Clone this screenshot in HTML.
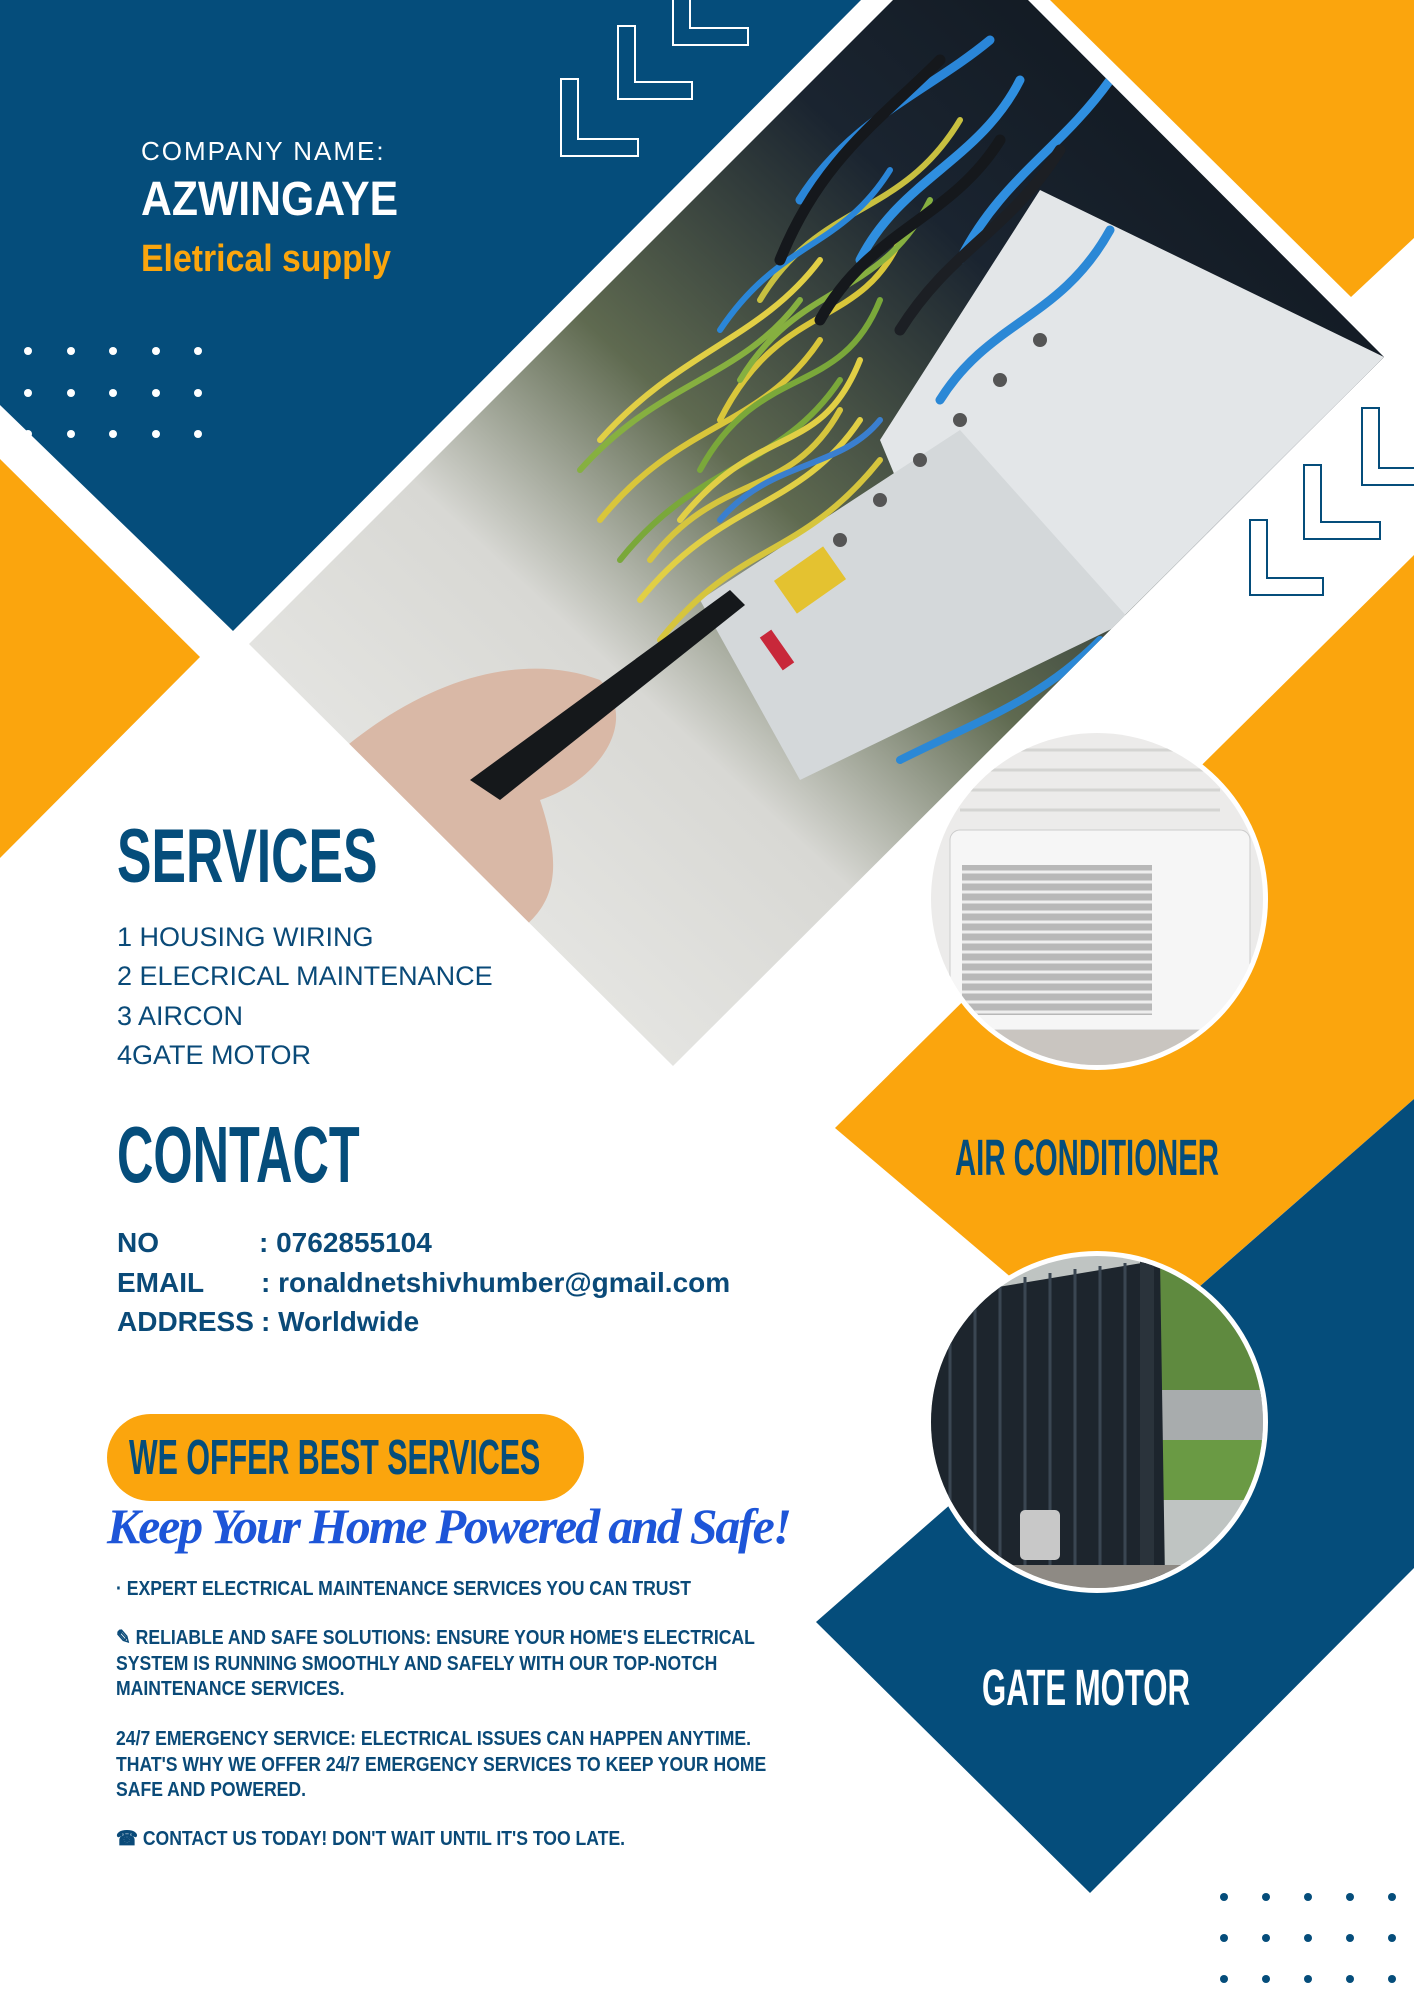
<!DOCTYPE html>
<html><head><meta charset="utf-8"><style>
*{margin:0;padding:0;box-sizing:border-box}
body{width:1414px;height:2000px;position:relative;overflow:hidden;background:#fff;font-family:"Liberation Sans",sans-serif;color:#0a4a78}
.a{position:absolute;white-space:nowrap;line-height:1}
.c{display:inline-block;transform-origin:0 0;font-weight:bold}
svg{position:absolute;left:0;top:0}
</style></head><body>
<svg width="1414" height="2000" viewBox="0 0 1414 2000">
<defs>
<clipPath id="ph"><polygon points="893,0 1028,0 1384,357 673,1066 249,644"/></clipPath>
<linearGradient id="pg" x1="0" y1="1" x2="1" y2="0">
<stop offset="0" stop-color="#f2f2f0"/><stop offset=".35" stop-color="#d8d8d4"/><stop offset=".5" stop-color="#5f6a50"/><stop offset=".7" stop-color="#1a2430"/><stop offset="1" stop-color="#0c1218"/></linearGradient>
<clipPath id="c1"><circle cx="1097" cy="899" r="166"/></clipPath>
<clipPath id="c2"><circle cx="1097" cy="1422" r="166"/></clipPath>
</defs>
<polygon points="0,0 861,0 233,631 0,405" fill="#054d7b"/>
<polygon points="1050,0 1414,0 1414,238 1351,297" fill="#fba50d"/>
<polygon points="0,459 200,657 0,858" fill="#fba50d"/>
<polygon points="835,1128 1414,555 1414,1099 1112,1363" fill="#fba50d"/>
<polygon points="816,1622 1414,1099 1414,1568 1090,1893" fill="#054d7b"/>
<g clip-path="url(#ph)">
<rect x="240" y="0" width="1150" height="1070" fill="url(#pg)"/>
<polygon points="1040,190 1384,357 1120,620 930,560 880,440" fill="#e3e6e8"/>
<polygon points="700,600 960,430 1130,620 800,780" fill="#d4d8da"/>
<g fill="none" stroke-width="6" stroke-linecap="round">
<path d="M600,520 C680,420 760,430 820,340" stroke="#d9c63a"/>
<path d="M620,560 C700,460 780,470 840,380" stroke="#7aa83a"/>
<path d="M640,600 C720,500 800,510 860,420" stroke="#e1cf45"/>
<path d="M580,470 C660,380 740,380 800,300" stroke="#86b040"/>
<path d="M600,440 C680,350 760,340 820,260" stroke="#e1cf45"/>
<path d="M660,640 C740,540 800,560 880,460" stroke="#d6c53d"/>
<path d="M720,420 C780,300 860,330 900,240" stroke="#d9c63a"/>
<path d="M700,470 C760,360 840,400 880,300" stroke="#7aa83a"/>
<path d="M680,520 C760,420 820,460 860,360" stroke="#e1cf45"/>
<path d="M740,380 C800,280 880,300 930,200" stroke="#86b040"/>
<path d="M650,560 C720,470 790,500 840,410" stroke="#d6c53d"/>
<path d="M760,300 C820,200 900,220 960,120" stroke="#c8c040"/>
<path d="M720,330 C780,240 840,250 890,170" stroke="#2a86d8"/>
<path d="M800,200 C850,120 930,90 990,40" stroke="#2a86d8" stroke-width="9"/>
<path d="M860,260 C900,180 980,160 1020,80" stroke="#2f8fe0" stroke-width="9"/>
<path d="M960,260 C1000,180 1060,150 1110,80" stroke="#2f8fe0" stroke-width="9"/>
<path d="M900,330 C950,250 1010,230 1060,150" stroke="#1c1f24" stroke-width="11"/>
<path d="M820,320 C870,230 950,220 1000,140" stroke="#15181c" stroke-width="11"/>
<path d="M780,260 C820,160 880,120 940,60" stroke="#15181c" stroke-width="11"/>
<path d="M940,400 C990,320 1060,320 1110,230" stroke="#2b88d6" stroke-width="9"/>
<path d="M720,520 C770,460 840,470 880,420" stroke="#3a7fcf"/>
<path d="M900,760 C980,720 1040,700 1100,640" stroke="#2b88d6" stroke-width="8"/>
</g>
<g fill="#555">
<circle cx="840" cy="540" r="7"/><circle cx="880" cy="500" r="7"/><circle cx="920" cy="460" r="7"/><circle cx="960" cy="420" r="7"/><circle cx="1000" cy="380" r="7"/><circle cx="1040" cy="340" r="7"/>
</g>
<rect x="780" y="560" width="60" height="40" fill="#e4c230" transform="rotate(-35 810 580)"/>
<rect x="770" y="630" width="14" height="40" fill="#c8283a" transform="rotate(-35 777 650)"/>
<path d="M330,760 C420,680 520,650 600,680 C640,720 600,780 540,800 C560,860 560,900 520,930 C470,950 400,900 330,820 Z" fill="#d9b8a6"/>
<path d="M470,780 L730,590 L745,605 L500,800 Z" fill="#15181b"/>
</g>
<g fill="none" stroke="#fff" stroke-width="2">
<path d="M561,79 h17 v60 h60 v17 h-77 Z"/>
<path d="M618,26 h17 v56 h57 v17 h-74 Z"/>
<path d="M673,-20 h17 v48 h58 v17 h-75 Z"/>
</g>
<g fill="none" stroke="#054d7b" stroke-width="2">
<path d="M1250,520 h17 v58 h56 v17 h-73 Z"/>
<path d="M1304,465 h17 v57 h59 v17 h-76 Z"/>
<path d="M1362,408 h17 v60 h40 v17 h-57 Z"/>
</g>
<g fill="#fff">
<circle cx="28" cy="351" r="4"/><circle cx="71" cy="351" r="4"/><circle cx="113" cy="351" r="4"/><circle cx="156" cy="351" r="4"/><circle cx="198" cy="351" r="4"/>
<circle cx="28" cy="393" r="4"/><circle cx="71" cy="393" r="4"/><circle cx="113" cy="393" r="4"/><circle cx="156" cy="393" r="4"/><circle cx="198" cy="393" r="4"/>
<circle cx="28" cy="434" r="4"/><circle cx="71" cy="434" r="4"/><circle cx="113" cy="434" r="4"/><circle cx="156" cy="434" r="4"/><circle cx="198" cy="434" r="4"/>
</g>
<g fill="#054d7b">
<circle cx="1224" cy="1897" r="4"/><circle cx="1266" cy="1897" r="4"/><circle cx="1308" cy="1897" r="4"/><circle cx="1350" cy="1897" r="4"/><circle cx="1392" cy="1897" r="4"/>
<circle cx="1224" cy="1938" r="4"/><circle cx="1266" cy="1938" r="4"/><circle cx="1308" cy="1938" r="4"/><circle cx="1350" cy="1938" r="4"/><circle cx="1392" cy="1938" r="4"/>
<circle cx="1224" cy="1979" r="4"/><circle cx="1266" cy="1979" r="4"/><circle cx="1308" cy="1979" r="4"/><circle cx="1350" cy="1979" r="4"/><circle cx="1392" cy="1979" r="4"/>
</g>
<circle cx="1097" cy="899" r="171" fill="#fff"/>
<g clip-path="url(#c1)">
<rect x="920" y="720" width="360" height="360" fill="#ecebea"/>
<g stroke="#d4d4d2" stroke-width="3"><path d="M960,750h260M960,770h260M960,790h260M960,810h260"/></g>
<rect x="950" y="830" width="300" height="200" rx="10" fill="#f6f6f6" stroke="#ccc"/>
<rect x="962" y="865" width="190" height="150" fill="#b8b8b8"/>
<g stroke="#eee" stroke-width="3"><path d="M962,872h190M962,882h190M962,892h190M962,902h190M962,912h190M962,922h190M962,932h190M962,942h190M962,952h190M962,962h190M962,972h190M962,982h190M962,992h190M962,1002h190M962,1012h190"/></g>
<rect x="960" y="1030" width="260" height="60" fill="#c9c5c0"/>
</g>
<circle cx="1097" cy="1422" r="171" fill="#fff"/>
<g clip-path="url(#c2)">
<rect x="920" y="1240" width="360" height="360" fill="#bfc4c2"/>
<rect x="1160" y="1250" width="130" height="150" fill="#5f8a3f"/>
<rect x="1160" y="1390" width="130" height="50" fill="#a8acad"/>
<rect x="1160" y="1440" width="130" height="60" fill="#6a9a44"/>
<polygon points="920,1300 1160,1260 1165,1580 920,1560" fill="#1d252d"/>
<g stroke="#3a4652" stroke-width="3"><path d="M950,1290v280M975,1285v285M1000,1281v290M1025,1277v294M1050,1273v298M1075,1269v302M1100,1266v306M1125,1263v310M1145,1261v312"/></g>
<rect x="1140" y="1260" width="14" height="320" fill="#2a333b"/>
<rect x="1020" y="1510" width="40" height="50" rx="5" fill="#c8c8c8"/>
<rect x="920" y="1565" width="360" height="40" fill="#8e8a84"/>
</g>
</svg>

<div class="a" style="left:141px;top:138px;font-size:26px;color:#fff;letter-spacing:2px">COMPANY NAME:</div>
<div class="a" style="left:141px;top:176px;font-size:48px;color:#fff"><span class="c" style="transform:scaleX(.89)">AZWINGAYE</span></div>
<div class="a" style="left:141px;top:240px;font-size:38px;color:#fba50d"><span class="c" style="transform:scaleX(.89)">Eletrical supply</span></div>

<div class="a" style="left:117px;top:819px;font-size:76px;color:#054d7b"><span class="c" style="transform:scaleX(.68)">SERVICES</span></div>
<div class="a" style="left:117px;top:924px;font-size:27px">1 HOUSING WIRING</div>
<div class="a" style="left:117px;top:963px;font-size:27px">2 ELECRICAL MAINTENANCE</div>
<div class="a" style="left:117px;top:1003px;font-size:27px">3 AIRCON</div>
<div class="a" style="left:117px;top:1042px;font-size:27px">4GATE MOTOR</div>

<div class="a" style="left:117px;top:1115px;font-size:80px;color:#054d7b"><span class="c" style="transform:scaleX(.63)">CONTACT</span></div>
<div class="a" style="left:117px;top:1229px;font-size:28px;font-weight:bold">NO</div>
<div class="a" style="left:259px;top:1229px;font-size:28px;font-weight:bold">: 0762855104</div>
<div class="a" style="left:117px;top:1269px;font-size:28px;font-weight:bold">EMAIL</div>
<div class="a" style="left:261px;top:1269px;font-size:28px;font-weight:bold">: ronaldnetshivhumber@gmail.com</div>
<div class="a" style="left:117px;top:1308px;font-size:28px;font-weight:bold">ADDRESS</div>
<div class="a" style="left:261px;top:1308px;font-size:28px;font-weight:bold">: Worldwide</div>

<div class="a" style="left:107px;top:1414px;width:477px;height:87px;border-radius:44px;background:#fba50d"></div>
<div class="a" style="left:129px;top:1434px;font-size:49px;color:#054d7b"><span class="c" style="transform:scaleX(.62)">WE OFFER BEST SERVICES</span></div>
<div class="a" style="left:107px;top:1501px;font-size:50px;font-family:'Liberation Serif',serif;font-style:italic;font-weight:bold;letter-spacing:-2.2px;color:#1d55d8">Keep Your Home Powered and Safe!</div>

<div class="a" style="left:116px;top:1577px;font-size:20px;line-height:25.5px"><span class="c" style="transform:scaleX(.88)">· EXPERT ELECTRICAL MAINTENANCE SERVICES YOU CAN TRUST</span></div>
<div class="a" style="left:116px;top:1626px;font-size:20px;line-height:25.5px"><span class="c" style="transform:scaleX(.88)">✎ RELIABLE AND SAFE SOLUTIONS: ENSURE YOUR HOME'S ELECTRICAL<br>SYSTEM IS RUNNING SMOOTHLY AND SAFELY WITH OUR TOP-NOTCH<br>MAINTENANCE SERVICES.</span></div>
<div class="a" style="left:116px;top:1727px;font-size:20px;line-height:25.5px"><span class="c" style="transform:scaleX(.88)">24/7 EMERGENCY SERVICE: ELECTRICAL ISSUES CAN HAPPEN ANYTIME.<br>THAT'S WHY WE OFFER 24/7 EMERGENCY SERVICES TO KEEP YOUR HOME<br>SAFE AND POWERED.</span></div>
<div class="a" style="left:116px;top:1827px;font-size:20px;line-height:25.5px"><span class="c" style="transform:scaleX(.88)">☎ CONTACT US TODAY! DON'T WAIT UNTIL IT'S TOO LATE.</span></div>

<div class="a" style="left:955px;top:1132px;font-size:51px;color:#054d7b"><span class="c" style="transform:scaleX(.575)">AIR CONDITIONER</span></div>
<div class="a" style="left:982px;top:1662px;font-size:51px;color:#fff"><span class="c" style="transform:scaleX(.61)">GATE MOTOR</span></div>
</body></html>
